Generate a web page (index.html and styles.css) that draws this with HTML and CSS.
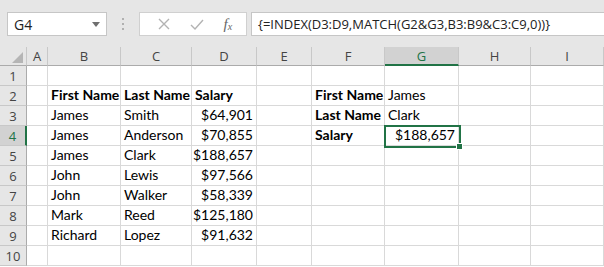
FILE: index.html
```html
<!DOCTYPE html>
<html lang="en">
<head>
    <meta charset="UTF-8">
    <title>INDEX MATCH two criteria</title>
    <link rel="stylesheet" href="styles.css">
</head>
<body>

    <!-- Formula bar -->
    <div class="toolbar">
        <div class="namebox">
            <span>G4</span>
            <svg class="drop" width="8" height="5" viewBox="0 0 8 5"><path d="M0 0h8L4 5z" fill="#6f6f6f"/></svg>
        </div>
        <div class="grip"><i></i><i></i><i></i></div>
        <div class="fbuttons">
            <svg width="12" height="12" viewBox="0 0 12 12"><path d="M1 1l10 10M11 1L1 11" stroke="#b3b3b3" stroke-width="1.4" fill="none"/></svg>
            <svg width="14" height="11" viewBox="0 0 14 11"><path d="M1 6l4 4 8-9" stroke="#b3b3b3" stroke-width="1.4" fill="none"/></svg>
            <span class="fx"><i>f</i><sub>x</sub></span>
        </div>
        <div class="formula">{=INDEX(D3:D9,MATCH(G2&amp;G3,B3:B9&amp;C3:C9,0))}</div>
    </div>

    <!-- Worksheet -->
    <div class="sheet">
        <div class="hd corner"><span class="tri"></span></div>
        <div class="hd">A</div><div class="hd">B</div><div class="hd">C</div><div class="hd">D</div><div class="hd">E</div><div class="hd">F</div><div class="hd sel-col">G</div><div class="hd">H</div><div class="hd">I</div>

        <div class="rh">1</div><div></div><div></div><div></div><div></div><div></div><div></div><div></div><div></div><div></div>
        <div class="rh">2</div><div></div><div class="b">First Name</div><div class="b">Last Name</div><div class="b">Salary</div><div></div><div class="b">First Name</div><div>James</div><div></div><div></div>
        <div class="rh">3</div><div></div><div>James</div><div>Smith</div><div class="num">$64,901</div><div></div><div class="b">Last Name</div><div>Clark</div><div></div><div></div>
        <div class="rh sel-row">4</div><div></div><div>James</div><div>Anderson</div><div class="num">$70,855</div><div></div><div class="b">Salary</div><div class="num">$188,657</div><div></div><div></div>
        <div class="rh">5</div><div></div><div>James</div><div>Clark</div><div class="num">$188,657</div><div></div><div></div><div></div><div></div><div></div>
        <div class="rh">6</div><div></div><div>John</div><div>Lewis</div><div class="num">$97,566</div><div></div><div></div><div></div><div></div><div></div>
        <div class="rh">7</div><div></div><div>John</div><div>Walker</div><div class="num">$58,339</div><div></div><div></div><div></div><div></div><div></div>
        <div class="rh">8</div><div></div><div>Mark</div><div>Reed</div><div class="num">$125,180</div><div></div><div></div><div></div><div></div><div></div>
        <div class="rh">9</div><div></div><div>Richard</div><div>Lopez</div><div class="num">$91,632</div><div></div><div></div><div></div><div></div><div></div>
        <div class="rh">10</div><div></div><div></div><div></div><div></div><div></div><div></div><div></div><div></div><div></div>

        <!-- active cell G4 -->
        <div class="active"><span class="handle"></span></div>
    </div>

</body>
</html>
```

FILE: styles.css
```css
body {
    margin: 0;
    width: 604px;
    height: 267px;
    overflow: hidden;
    background: #fff;
    font-family: Lato, "Liberation Sans", sans-serif;
}
.toolbar {
    display: flex;
    align-items: flex-start;
    height: 47px;
    padding: 12px 0 0 7px;
    box-sizing: border-box;
    background: #e6e6e6;
    overflow: hidden;
}
.namebox {
    width: 100px;
    height: 24px;
    box-sizing: border-box;
    background: #fff;
    border: 1px solid #c6c6c6;
    display: flex;
    align-items: center;
    justify-content: space-between;
    padding: 0 6px 0 6px;
    font-family: "Open Sans", sans-serif;
    font-size: 14px;
    color: #222;
}
.grip {
    width: 32px;
    height: 24px;
    display: flex;
    flex-direction: column;
    align-items: center;
    justify-content: center;
    gap: 3px;
}
.grip i {
    width: 2px;
    height: 2px;
    background: #b0b0b0;
}
.fbuttons {
    width: 108px;
    height: 24px;
    box-sizing: border-box;
    background: #fff;
    border: 1px solid #d0d0d0;
    display: flex;
    align-items: center;
    justify-content: space-around;
    padding: 0 4px 0 8px;
}
.fx {
    font-family: "Liberation Serif", serif;
    font-size: 15px;
    color: #666;
}
.fx sub {
    font-style: italic;
    font-size: 10px;
    vertical-align: -1px;
}
.formula {
    margin-left: 4px;
    flex: 1;
    height: 24px;
    box-sizing: border-box;
    background: #fff;
    border: 1px solid #c6c6c6;
    border-right: none;
    padding: 0 6px;
    line-height: 22px;
    font-family: "Open Sans", sans-serif;
    font-size: 13px;
    color: #222;
    white-space: nowrap;
}
.sheet {
    position: relative;
    display: grid;
    grid-template-columns: 27px 21px 73px 71px 65px 55px 73px 74px 72px 73px;
    grid-template-rows: 19px repeat(10, 20px);
    font-size: 14px;
    color: #000;
}
.sheet > div {
    box-sizing: border-box;
    border-right: 1px solid #d9d9d9;
    border-bottom: 1px solid #d9d9d9;
    padding: 0 3px 2px;
    display: flex;
    align-items: flex-end;
    white-space: nowrap;
}
.sheet > .hd, .sheet > .rh {
    background: #e6e6e6;
    color: #444;
    justify-content: center;
    align-items: center;
    padding: 0;
    font-family: "Open Sans", sans-serif;
    font-size: 13px;
}
.sheet > .hd {
    border-right-color: #c8c8c8;
    border-bottom-color: #ababab;
}
.sheet > .rh {
    border-right-color: #ababab;
    border-bottom-color: #c8c8c8;
}
.sheet > .sel-col {
    background: #d2d2d2;
    border-bottom: 2px solid #217346;
    color: #217346;
}
.sheet > .sel-row {
    background: #d2d2d2;
    border-right: 2px solid #217346;
    color: #217346;
}
.corner {
    position: relative;
}
.tri {
    position: absolute;
    right: 3px;
    bottom: 2px;
    width: 0;
    height: 0;
    border-left: 11px solid transparent;
    border-bottom: 11px solid #b5b5b5;
}
.sheet > .b {
    font-weight: bold;
}
.sheet > .num {
    justify-content: flex-end;
}
.sheet > .active {
    position: absolute;
    left: 384px;
    top: 78px;
    width: 77px;
    height: 23px;
    border: 2px solid #217346;
    padding: 0;
}
.handle {
    position: absolute;
    right: -4px;
    bottom: -4px;
    width: 5px;
    height: 5px;
    background: #217346;
    border: 1px solid #fff;
}
```
